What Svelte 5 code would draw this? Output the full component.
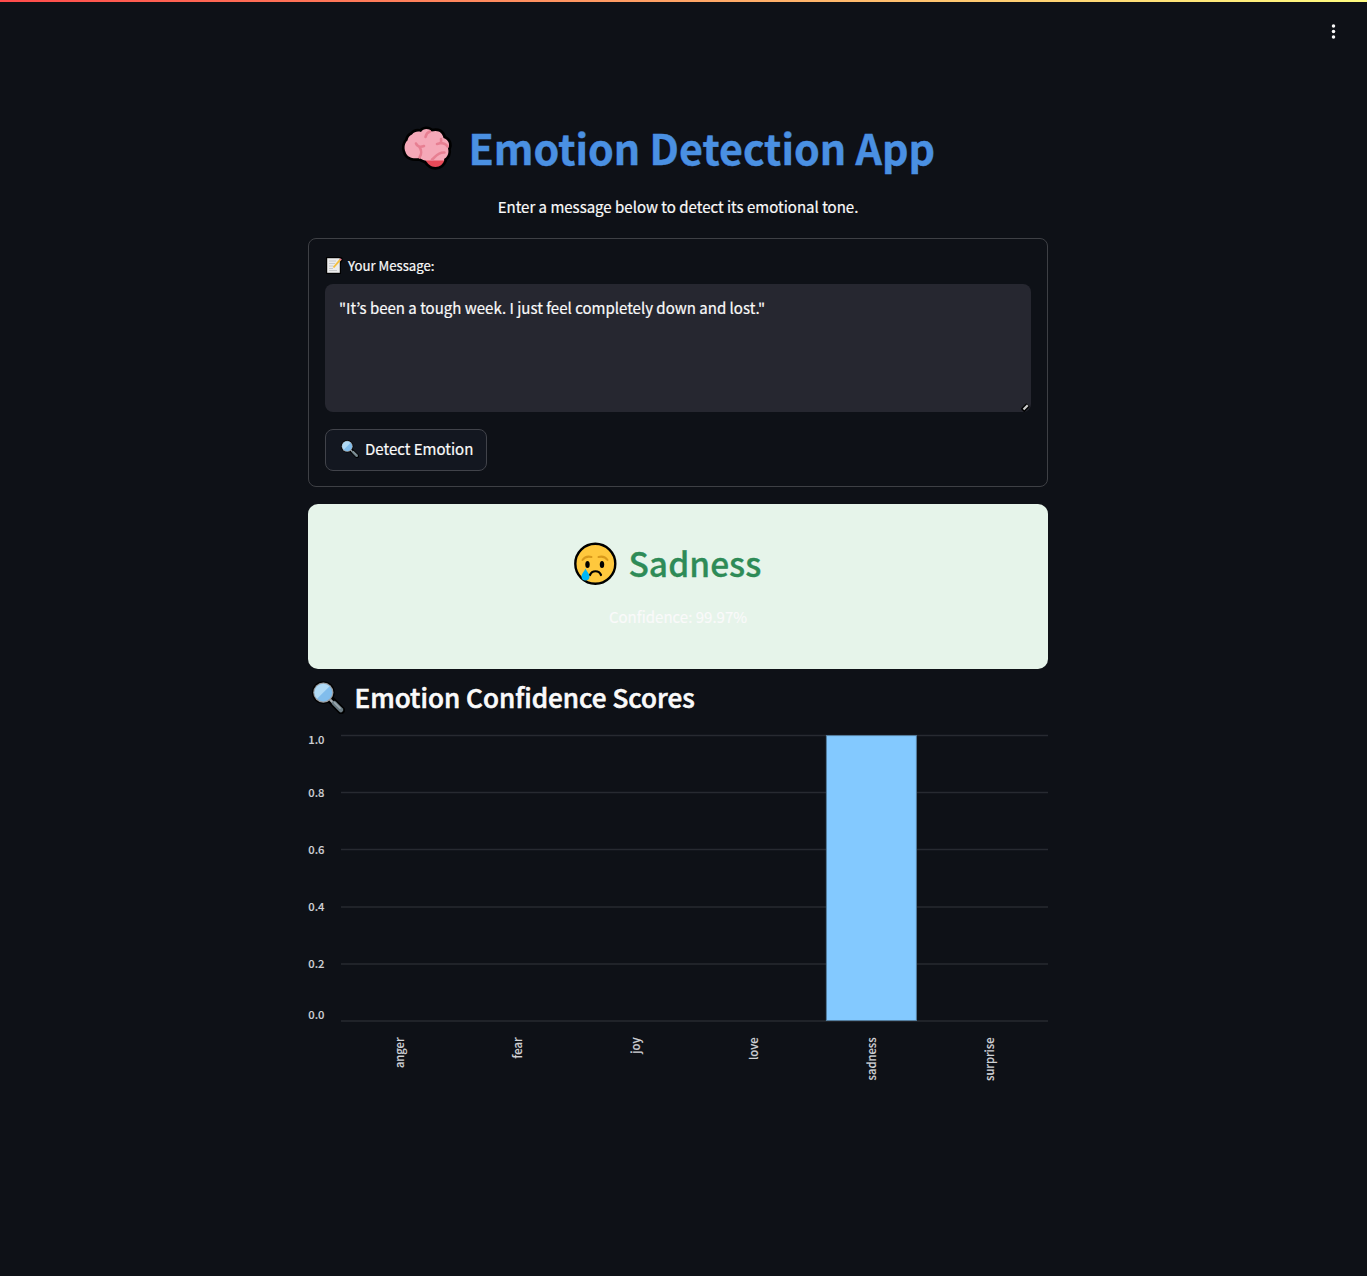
<script>
  const ticks = [
    { label: '1.0', y: 0.5, ty: 9 },
    { label: '0.8', y: 57.5, ty: 62 },
    { label: '0.6', y: 114.5, ty: 119 },
    { label: '0.4', y: 172, ty: 176 },
    { label: '0.2', y: 229, ty: 232.5 },
    { label: '0.0', y: 286, ty: 284 },
  ];
  const scores = [
    { name: 'anger', value: 0 },
    { name: 'fear', value: 0 },
    { name: 'joy', value: 0 },
    { name: 'love', value: 0 },
    { name: 'sadness', value: 0.9997 },
    { name: 'surprise', value: 0 },
  ];
  const step = 118;
  const plotHeight = 285;
  let message = $state('"It’s been a tough week. I just feel completely down and lost."');
</script>

{#snippet magnifier(cls)}
  <svg class={cls} viewBox="0 0 32 32" aria-hidden="true">
    <path d="M18.5 18.5 28.3 28.3" stroke="#000" stroke-width="7.5" stroke-linecap="round" />
    <circle cx="11" cy="11.2" r="11" fill="#000" />
    <path d="m17.5 18 3.2 3.2" stroke="#a5adb1" stroke-width="2.4" />
    <path d="m21.5 21.5 6.5 6.5" stroke="#6b7c84" stroke-width="4.6" stroke-linecap="round" />
    <path d="m21.8 21 5.4 5.3" stroke="#9aa7ad" stroke-width="1.6" stroke-linecap="round" />
    <circle cx="11" cy="11.2" r="9.8" fill="#9c9fa2" />
    <circle cx="11" cy="11.2" r="8.6" fill="#81bdec" />
    <path d="M4.9 17.3A8.6 8.6 0 0 1 17.1 5.1Z" fill="#b0daf5" />
  </svg>
{/snippet}

<div class="page">
  <div class="decoration"></div>
  <header>
    <button class="menu" aria-label="Menu">
      <svg viewBox="0 0 16 16"><circle cx="8" cy="2.8" r="1.65" /><circle cx="8" cy="8" r="1.65" /><circle cx="8" cy="13.2" r="1.65" /></svg>
    </button>
  </header>

  <main>
    <h1>
      <svg class="brain" viewBox="1 0 51 44" aria-hidden="true">
        <g stroke="#000" stroke-width="5.4" stroke-linejoin="round">
          <path d="M24 33.5h19.5c-1 4.5-4.5 7.5-9 7.5-5 0-8-3.5-10.5-7.5Z" />
          <path d="M11 8.5c2.5-3 6-3.5 9-2.5 2-3.5 8-4 10.5-.5 7-2 11 1 12 6.500 5 1.500 7 6.500 4.500 10.500 1.500 5-1 9-4 10.500v1.500H24c-2.500-.5-4-2-6-2.500-6 1-12-.5-13.500-6-2-5-.5-9.500 2-11.500.5-3 2-5 4.500-6Z" />
        </g>
        <path d="M24 33.5h19.5c-1 4.5-4.5 7.5-9 7.5-5 0-8-3.5-10.5-7.5Z" fill="#e84a58" />
        <path d="M11 8.5c2.5-3 6-3.5 9-2.5 2-3.5 8-4 10.5-.5 7-2 11 1 12 6.500 5 1.500 7 6.500 4.500 10.500 1.500 5-1 9-4 10.500v1.500H24c-2.500-.5-4-2-6-2.500-6 1-12-.5-13.500-6-2-5-.5-9.500 2-11.500.5-3 2-5 4.500-6Z" fill="#f5a8b8" />
        <g fill="none" stroke="#e77f92" stroke-width="2.6" stroke-linecap="round">
          <path d="M15 17.5c1 3 4 4 8 2.5M18 20.5c3 3.500 2.500 8 .5 11M29 5.500c-3 1-4 3-4.500 5.500M40 13c.5 3 .5 4.500-4 5M39 17c4 0 6 1 7.500 3.500M43.500 26.500c-7-.5-8.500 4-12.500 7" />
        </g>
      </svg>
      <span>Emotion Detection App</span>
    </h1>
    <p class="intro">Enter a message below to detect its emotional tone.</p>

    <form onsubmit={(e) => e.preventDefault()}>
      <label for="message">
        <svg class="memo" viewBox="0 0 17 17" aria-hidden="true">
          <path d="M0 0h15l1.5 1v3L15 6v11H0Z" fill="#000" />
          <path d="M1.2 1.2h12.6v14.6H1.2Z" fill="#ececec" />
          <path d="M3 4h7M3 6.5h6M3 9h4.5M3 11.5h4M3 13.5h8" stroke="#c4c6c8" stroke-width=".9" />
          <path d="m7.5 10.5 6.8-7.8" stroke="#f3bf3e" stroke-width="1.9" />
          <path d="m14 3.1 1.2-1.3" stroke="#e77f92" stroke-width="1.9" />
        </svg>
        <span>Your Message:</span>
      </label>
      <div class="field">
        <textarea id="message" bind:value={message} spellcheck="false"></textarea>
        <svg class="grip" viewBox="0 0 9 9" aria-hidden="true"><path d="m1.5 7.5 5.5-5.5" stroke="#000" stroke-width="5" /><path d="m2.5 6.5 4.2-4.2" stroke="#ccc" stroke-width="2.2" /></svg>
      </div>
      <button class="detect">{@render magnifier('glass-small')}<span>Detect Emotion</span></button>
    </form>

    <section class="result">
      <h2>
        <svg class="face" viewBox="0 0 44 44" aria-hidden="true">
          <circle cx="22.3" cy="21.8" r="20" fill="#ffc83d" stroke="#000" stroke-width="2.4" />
          <g fill="none" stroke="#d99a1c" stroke-width="2" stroke-linecap="round"><path d="M9.5 18c2-3 5-4 9-3M25.5 15c4-1 7 0 9 3" /></g>
          <ellipse cx="14.5" cy="22.5" rx="2.2" ry="3.6" /><ellipse cx="29" cy="22.5" rx="2.2" ry="3.6" />
          <path d="M17 33c2-5 9-5 11 0" fill="none" stroke="#000" stroke-width="2.2" stroke-linecap="round" />
          <path d="M12.5 26.5c1 3 4 5 4 8a4 4 0 0 1-8 0c0-3 3-5 4-8Z" fill="#00b7f5" />
        </svg>
        <span>Sadness</span>
      </h2>
      <p>Confidence: 99.97%</p>
    </section>

    <h3>{@render magnifier('glass-large')}<span>Emotion Confidence Scores</span></h3>

    <svg class="chart" viewBox="0 0 740 352" role="img" aria-label="Emotion confidence scores">
      {#each ticks as tick}
        <line x1="33" x2="740" y1={tick.y} y2={tick.y} />
        <text x="0.3" y={tick.ty}>{tick.label}</text>
      {/each}
      {#each scores as score, i}
        {#if score.value > 0}
          <rect x={46.4 + i * step} y={plotHeight * (1 - score.value) + 0.5} width="90" height={plotHeight * score.value} />
        {/if}
        <text text-anchor="end" transform="translate({96.2 + i * step} 302.5) rotate(-90)">{score.name}</text>
      {/each}
    </svg>
  </main>
</div>

<style>
  :global(body) { background: #0e1117; }
  .page {
    box-sizing: border-box; min-height: 1276px; padding-right: 11px;
    background: #0e1117; color: #fafafa;
    font-family: "Noto Sans CJK KR", "Noto Sans", sans-serif; font-size: 15.03px;
  }
  .decoration { height: 2px; margin-right: -11px; background: linear-gradient(90deg, #ff4b4b, #fffd80); }
  header { display: flex; justify-content: flex-end; height: 118px; padding: 21px 14px 0 0; box-sizing: border-box; }
  .menu { width: 17px; height: 17px; padding: 0; border: 0; background: none; }
  .menu svg { display: block; width: 17px; height: 17px; fill: #fafafa; }
  main { width: 740px; margin: 0 auto; }
  h1, h2, h3, p { margin: 0; }
  h1 { display: flex; height: 60px; line-height: 54px; padding-left: 93px; gap: 14px; color: #4a90e2; font-size: 41.2px; font-weight: 700; white-space: nowrap; -webkit-text-stroke: 0.4px #4a90e2; }
  .brain { width: 53px; height: 44px; margin-top: 6px; flex: none; }
  h1 span { margin-left: 0.5px; }
  .intro { height: 24px; line-height: 22px; margin-top: 16px; margin-bottom: 18px; text-align: center; }
  .intro, label, textarea, .detect, .result p { -webkit-text-stroke: 0.2px #fafafa; }
  form { box-sizing: border-box; height: 249px; padding: 16px; border: 1px solid #3e4045; border-radius: 8px; }
  label { display: flex; height: 22px; line-height: 22px; gap: 5px; font-size: 13.2px; margin-bottom: 7px; }
  .memo { width: 17px; height: 17px; margin: 2px 0 0 1px; }
  .field { position: relative; height: 128px; }
  textarea { box-sizing: border-box; display: block; width: 706px; height: 128px; padding: 13px 14px; border: 0; border-radius: 8px; background: #262730; color: #fafafa; font: inherit; line-height: 22px; resize: none; outline: none; }
  .grip { position: absolute; right: 1px; bottom: 0; width: 9px; height: 9px; }
  .detect { box-sizing: border-box; display: flex; align-items: center; width: 162px; height: 42px; margin-top: 17px; padding: 0 0 3px 15px; gap: 6px; border: 1px solid #41434a; border-radius: 8px; background: #131720; color: #fafafa; font: inherit; white-space: nowrap; }
  .glass-small { width: 18px; height: 18px; flex: none; }
  .result { box-sizing: border-box; height: 165px; margin-top: 17px; padding-top: 38px; border-radius: 10px; background: #e6f4ea; }
  h2 { display: flex; height: 44px; line-height: 41px; padding-left: 265px; gap: 11.5px; color: #2e8b57; font-size: 33.5px; font-weight: 500; -webkit-text-stroke: 0.3px #2e8b57; }
  .face { width: 44px; height: 44px; flex: none; }
  .result p { height: 24px; line-height: 22px; margin-top: 20px; text-align: center; }
  h3 { display: flex; height: 36px; line-height: 32px; margin-top: 12px; padding-left: 4px; gap: 9.5px; font-size: 26.05px; font-weight: 500; -webkit-text-stroke: 0.6px #fafafa; }
  .glass-large { width: 33px; height: 33px; flex: none; }
  .glass-large, .glass-small { fill: none; }
  .chart { display: block; width: 740px; height: 352px; margin-top: 18px; overflow: visible; }
  .chart line { stroke: #272a31; stroke-width: 1.5; }
  .chart rect { fill: #83c9ff; stroke: #547e9f; stroke-width: 1; }
  .chart text { fill: #d0d2d6; stroke: #d0d2d6; stroke-width: 0.15; font-size: 11.2px; font-weight: 500; }
</style>
